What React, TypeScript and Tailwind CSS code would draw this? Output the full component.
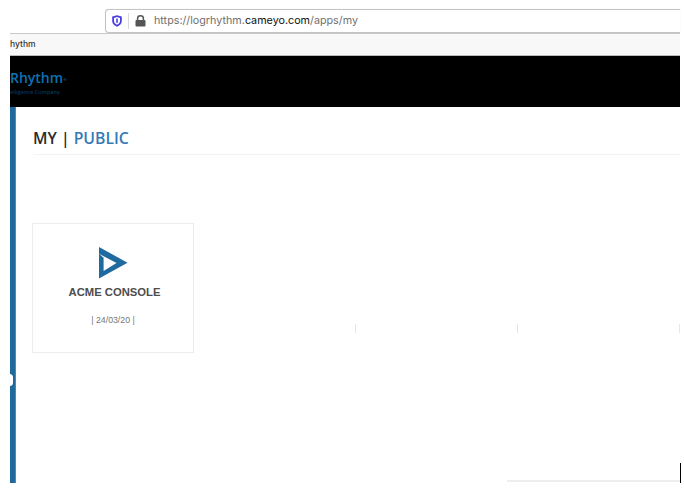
const sans = "font-['Inter','Liberation_Sans',sans-serif]";

function Shield() {
  return (
    <svg width="10" height="12" viewBox="0 0 10 12" aria-hidden="true">
      <path d="M5 0.2 L9.8 1.6 V6 C9.8 8.8 7.6 10.8 5 11.8 C2.4 10.8 0.2 8.8 0.2 6 V1.6 Z" fill="#4b3fe0" />
      <path d="M5 2 L8 2.9 V6 C8 7.7 6.6 9 5 9.8 C3.4 9 2 7.7 2 6 V2.9 Z" fill="#fff" />
      <path d="M4.2 3.4 H5.8 V7.6 L5 8.2 L4.2 7.6 Z" fill="#4b3fe0" />
    </svg>
  );
}

function Lock() {
  return (
    <svg width="11" height="12" viewBox="0 0 11 12" aria-hidden="true">
      <path d="M2.6 5 V3.5 C2.6 1.8 3.8 0.8 5.5 0.8 C7.2 0.8 8.4 1.8 8.4 3.5 V5" fill="none" stroke="#555" strokeWidth="1.5" />
      <rect x="0.5" y="5" width="10" height="6.6" rx="1" fill="#555" />
    </svg>
  );
}

function Mark() {
  return (
    <svg width="30" height="32" viewBox="0 0 30 32" className="ml-[2px]" aria-hidden="true">
      <path
        d="M0 0 L28.5 15.7 L0 31.5 Z M0 6.8 L17.5 16 L4.6 24 L4.6 10.8 Z"
        fill="#1f6a9e"
        fillRule="evenodd"
      />
    </svg>
  );
}

function Tick() {
  return (
    <div className="w-[162px] shrink-0 pt-[101px] flex justify-end">
      <div className="w-px h-[9px] bg-[#e6e6e6]" />
    </div>
  );
}

export default function App() {
  return (
    <div className="w-[684px] h-[489px] overflow-hidden bg-white pl-[10px] pr-[4px] flex flex-col">
      <div className="h-[33px] shrink-0 bg-white pt-[9px] pl-[95px]">
        <div className="h-[24px] flex items-center bg-white border border-r-0 border-[#c4c4c4] rounded-l-[4px] shadow-[0_0_1px_rgba(0,0,0,0.15)]">
          <div className="ml-[6px] flex items-center"><Shield /></div>
          <div className="ml-[6px] w-px h-[16px] bg-[#d9d9d9]" />
          <div className="ml-[6px] flex items-center"><Lock /></div>
          <div className={`ml-[8px] text-[10.75px] leading-none text-[#707070] whitespace-nowrap ${sans}`}>
            https://logrhythm.<span className="text-[#111]">cameyo.com</span>/apps/my
          </div>
        </div>
      </div>
      <div className={`h-[22px] shrink-0 bg-[#f8f8f8] border-t border-[#c8c8c8] flex items-center text-[8.5px] font-medium text-[#333] ${sans}`}>
        hythm
      </div>
      <div className="h-[52px] shrink-0 bg-black border-t border-[#bbb] overflow-hidden flex flex-col pt-[12px]">
        <div className="font-['Open_Sans',sans-serif] font-semibold text-[14px] leading-[19px] text-[#0a72b5] whitespace-nowrap">
          Rhythm<sup className="text-[4px]">®</sup>
        </div>
        <div className="font-['Open_Sans',sans-serif] text-[5.5px] leading-[8px] font-semibold text-[#06375c] mt-px whitespace-nowrap">
          elligence Company
        </div>
      </div>
      <div className="h-[376px] shrink-0 flex">
        <div className="w-[6px] shrink-0 bg-[#206a9b] border-r border-[#4c8ab2] relative">
          <div className="absolute left-[-4px] top-[267px] w-[7px] h-[12px] rounded-full bg-white" />
        </div>
        <div className="flex-1 min-w-0 flex flex-col relative">
          <div className="ml-[16px] h-[48px] shrink-0 border-b border-[#f3f3f3] rounded-bl-[3px] pt-[20px] pl-px font-['Open_Sans',sans-serif] font-semibold text-[15.75px] leading-[22px] text-[#2b2b2b] whitespace-nowrap">
            MY | <span className="text-[#337ab7]">PUBLIC</span>
          </div>
          <div className="ml-[16px] mt-[68px] flex">
            <div className="w-[162px] h-[130px] shrink-0 border border-[#ececec] flex flex-col items-center pt-[23px]">
              <Mark />
              <div className="mt-[6px] ml-[3px] font-['Liberation_Sans',sans-serif] font-bold text-[11.25px] leading-[14px] text-[#4d4d4d] whitespace-nowrap">
                ACME CONSOLE
              </div>
              <div className="mt-[15px] font-['Liberation_Sans',sans-serif] text-[8.75px] leading-[12px] text-[#777] whitespace-nowrap">
                | 24/03/20 |
              </div>
            </div>
            <Tick />
            <Tick />
            <Tick />
          </div>
          <div className="absolute right-0 bottom-[1px] w-[173px] h-[2px] bg-[#eeeeee]" />
          <div className="absolute right-0 bottom-0 w-px h-[20px] bg-black translate-x-px" />
        </div>
      </div>
    </div>
  );
}
